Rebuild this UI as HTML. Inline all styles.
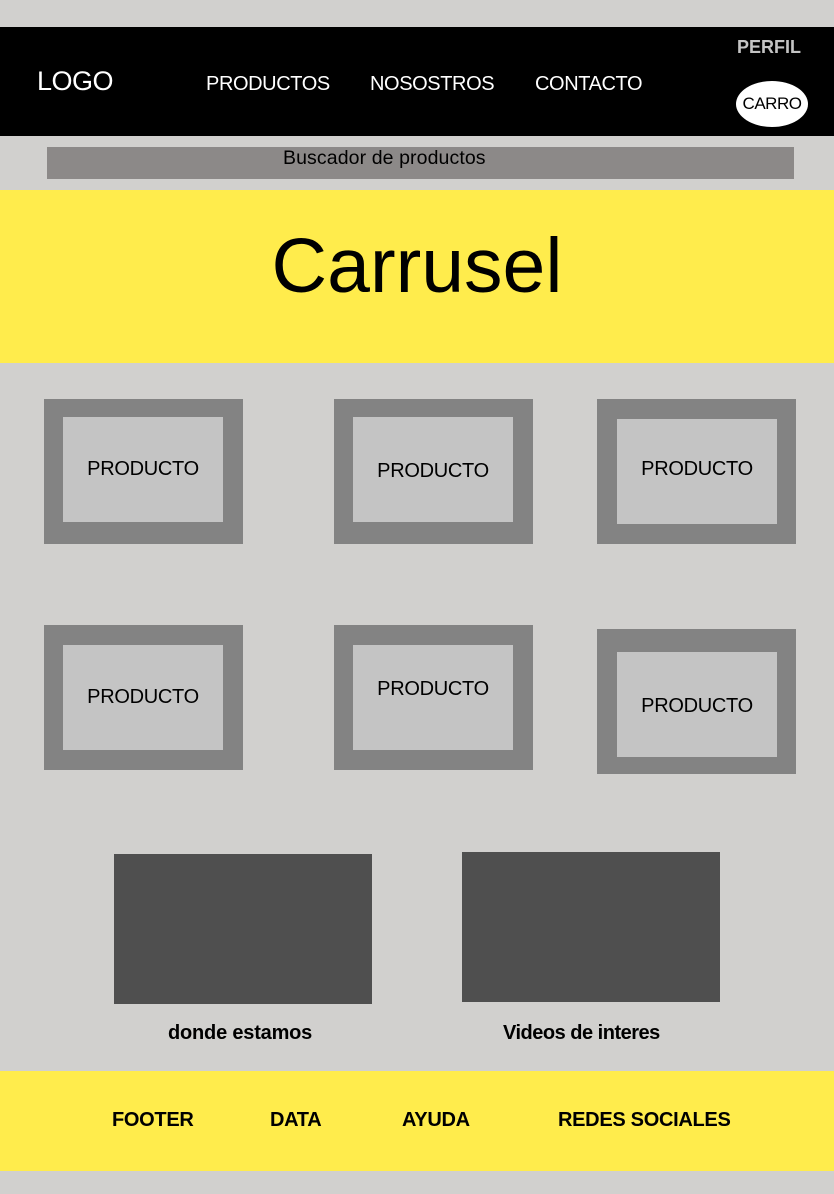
<!DOCTYPE html>
<html><head><meta charset="utf-8"><style>
*{margin:0;padding:0;box-sizing:border-box}
body{width:834px;height:1194px;background:#d1d0ce;position:relative;font-family:"Liberation Sans",Arial,sans-serif;overflow:hidden}
.a{position:absolute}
.t{position:absolute;white-space:nowrap}
.out{position:absolute;background:#838383;width:199px;height:145px}
.in{position:absolute;background:#c4c4c4;width:160px;height:105px;display:flex;align-items:center;justify-content:center;font-size:20px;color:#000;letter-spacing:-0.3px}
.f{position:absolute;top:1109px;font-size:20px;font-weight:bold;white-space:nowrap;letter-spacing:-0.3px}
</style></head><body>
<div class="a" style="left:0;top:27px;width:834px;height:109px;background:#000"></div>
<div class="t" style="left:37px;top:66px;font-size:27px;color:#fff;letter-spacing:-0.5px">LOGO</div>
<div class="t" style="left:206px;top:73px;font-size:20px;color:#fff;letter-spacing:-0.4px">PRODUCTOS</div>
<div class="t" style="left:370px;top:73px;font-size:20px;color:#fff;letter-spacing:-0.4px">NOSOSTROS</div>
<div class="t" style="left:535px;top:73px;font-size:20px;color:#fff;letter-spacing:-0.4px">CONTACTO</div>
<div class="t" style="left:737px;top:37px;font-size:18px;font-weight:bold;color:#c4c4c4">PERFIL</div>
<div class="a" style="left:736px;top:81px;width:72px;height:46px;border-radius:50%;background:#fff;display:flex;align-items:center;justify-content:center;font-size:17px;letter-spacing:-0.5px">CARRO</div>
<div class="a" style="left:47px;top:147px;width:747px;height:32px;background:#8c8988"></div>
<div class="t" style="left:283px;top:147px;font-size:19.5px;letter-spacing:0.1px">Buscador de productos</div>
<div class="a" style="left:0;top:190px;width:834px;height:173px;background:#ffec4c"></div>
<div class="t" style="left:0;width:834px;text-align:center;top:222px;font-size:77px">Carrusel</div>

<div class="out" style="left:44px;top:399px"></div><div class="in" style="left:63px;top:417px">PRODUCTO</div>
<div class="out" style="left:334px;top:399px"></div><div class="in" style="left:353px;top:417px;padding-top:4px">PRODUCTO</div>
<div class="out" style="left:597px;top:399px"></div><div class="in" style="left:617px;top:419px;padding-bottom:4px">PRODUCTO</div>
<div class="out" style="left:44px;top:625px"></div><div class="in" style="left:63px;top:645px">PRODUCTO</div>
<div class="out" style="left:334px;top:625px"></div><div class="in" style="left:353px;top:645px;padding-bottom:16px">PRODUCTO</div>
<div class="out" style="left:597px;top:629px"></div><div class="in" style="left:617px;top:652px;padding-top:4px">PRODUCTO</div>

<div class="a" style="left:114px;top:854px;width:258px;height:150px;background:#4f4f4f"></div>
<div class="a" style="left:462px;top:852px;width:258px;height:150px;background:#4f4f4f"></div>
<div class="t" style="left:168px;top:1022px;font-size:20px;font-weight:bold;letter-spacing:-0.2px">donde estamos</div>
<div class="t" style="left:503px;top:1022px;font-size:20px;font-weight:bold;letter-spacing:-0.5px">Videos de interes</div>

<div class="a" style="left:0;top:1071px;width:834px;height:100px;background:#ffec4c"></div>
<div class="f" style="left:112px">FOOTER</div>
<div class="f" style="left:270px">DATA</div>
<div class="f" style="left:402px">AYUDA</div>
<div class="f" style="left:558px">REDES SOCIALES</div>
</body></html>
